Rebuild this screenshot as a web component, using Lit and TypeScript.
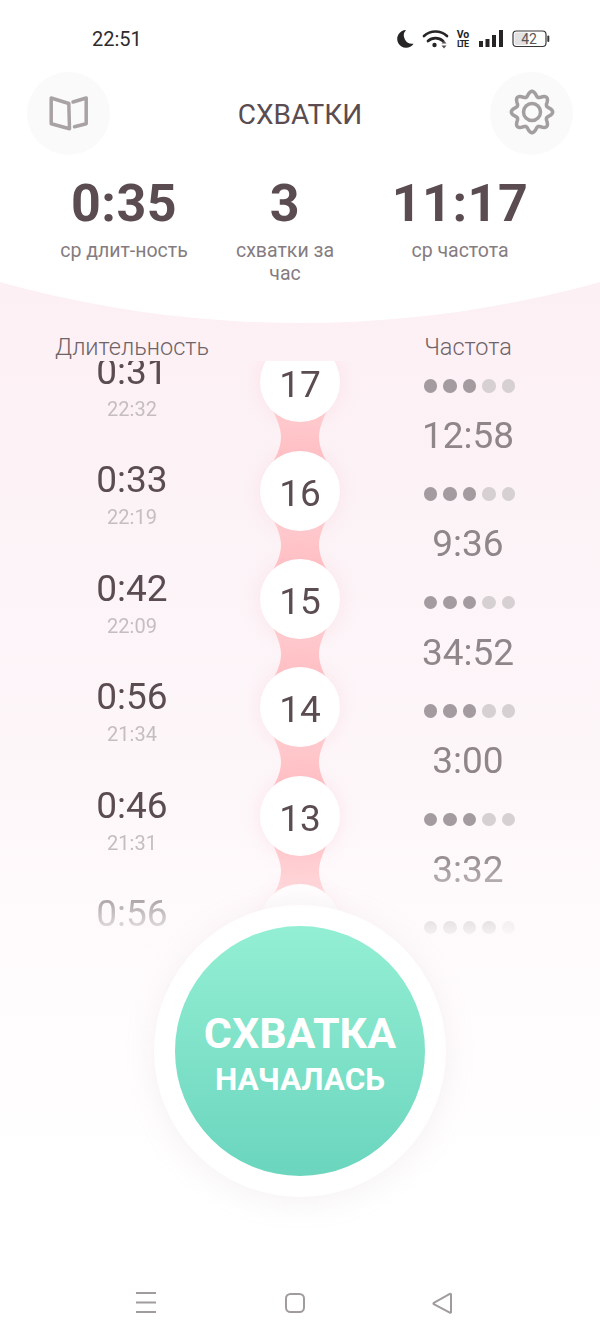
import { LitElement, html, css, svg } from "lit";
import { customElement } from "lit/decorators.js";

const rows = [
  { n: 17, dur: "0:31", at: "22:32", freq: "12:58", on: 3 },
  { n: 16, dur: "0:33", at: "22:19", freq: "9:36", on: 3 },
  { n: 15, dur: "0:42", at: "22:09", freq: "34:52", on: 3 },
  { n: 14, dur: "0:56", at: "21:34", freq: "3:00", on: 3 },
  { n: 13, dur: "0:46", at: "21:31", freq: "3:32", on: 3 },
  { n: 12, dur: "0:56", at: "21:27", freq: "4:10", on: 4 },
];

function gearPath(cx: number, cy: number) {
  const pts: string[] = [];
  for (let i = 0; i < 144; i++) {
    const a = (i / 144) * Math.PI * 2;
    const r = 18.2 + 2.5 * Math.cos(8 * a);
    pts.push(`${(cx + r * Math.sin(a)).toFixed(2)} ${(cy - r * Math.cos(a)).toFixed(2)}`);
  }
  return "M" + pts.join("L") + "Z";
}

@customElement("app-root")
export class AppRoot extends LitElement {
  static styles = css`
    :host { display: block; width: 600px; height: 1339px; font-family: Roboto, "Noto Sans", sans-serif; color: #5a4c50; }
    .screen {
      position: relative; width: 600px; height: 1339px; overflow: hidden; display: flex; flex-direction: column;
      background: linear-gradient(180deg, #fdf0f4 285px, #fcf3f7 500px, #fdf6f9 750px, #fffcfd 1000px, #ffffff 1180px);
    }
    .top { position: relative; height: 334px; flex: none; isolation: isolate; }
    .top::before {
      content: ""; position: absolute; z-index: -1; left: -818px; width: 2236px; height: 2236px; top: -1913px;
      border-radius: 50%; background: #fff;
    }
    .status { height: 71px; display: flex; align-items: flex-start; padding: 0 50px 0 92px; box-sizing: border-box; }
    .clock { font-size: 20px; line-height: 24px; margin-top: 27px; color: #2f2b2d; flex: 1; }
    .status-icons { display: block; margin-top: 26px; }
    .status-icons text { font-family: Roboto, sans-serif; }
    .bar { height: 84px; display: flex; align-items: center; justify-content: space-between; padding: 0 27px; }
    .round { width: 83px; height: 83px; border-radius: 50%; background: #fafafb; display: flex; align-items: center; justify-content: center; }
    .title { font-size: 28px; line-height: 34px; margin-top: 3px; color: #5a4c50; }
    .stats { display: grid; grid-template-columns: 200px 122px 228px; padding-left: 24px; margin-top: 21px; text-align: center; }
    .stat-value { font-size: 52px; line-height: 56px; font-weight: 700; color: #5a4c50; letter-spacing: 0.5px; }
    .stat-label { font-size: 19.5px; line-height: 23px; margin-top: 7px; color: #857c7f; }
    .heads { height: 27px; flex: none; display: grid; grid-template-columns: 264px 72px 264px; font-size: 23.5px; font-weight: 300; line-height: 27px; color: #6e6367; text-align: center; }
    .list {
      flex: none; height: 584px; overflow: hidden; display: grid; grid-template-columns: 264px 72px 264px;
      -webkit-mask-image: linear-gradient(180deg, #000 490px, transparent 584px);
      mask-image: linear-gradient(180deg, #000 490px, transparent 584px);
    }
    .col { display: flex; flex-direction: column; align-items: center; margin-top: -31px; }
    .col.mid { margin-top: -33px; }
    .dur { height: 108.4px; flex: none; display: flex; flex-direction: column; align-items: center; justify-content: flex-start; padding-top: 20px; box-sizing: border-box; }
    .dur b { font-weight: 400; font-size: 37px; line-height: 44px; color: #5a4c50; }
    .dur span { font-size: 20px; line-height: 24px; color: #c5bec1; margin-top: 3px; }
    .bead { position: relative; height: 108.4px; flex: none; width: 72px; display: flex; align-items: center; justify-content: center; }
    .circle {
      position: relative; z-index: 1; flex: none; width: 80px; height: 80px; border-radius: 50%; background: #fff; text-align: center;
      font-size: 37px; line-height: 85px; color: #5a4c50; box-shadow: 0 0 18px rgba(250, 190, 200, .3);
    }
    .link { position: absolute; left: 1px; top: 82px; z-index: 0; display: block; }
    .freq { height: 108.4px; flex: none; box-sizing: border-box; padding-top: 49px; display: flex; flex-direction: column; align-items: center; }
    .dots { display: flex; gap: 6px; height: 14px; flex: none; margin-left: 3px; }
    .dot { width: 13.5px; height: 13.5px; border-radius: 50%; background: #d6d0d3; }
    .dot.on { background: #a39b9f; }
    .freq b { font-weight: 400; font-size: 37px; line-height: 44px; color: #8f868a; margin-top: 21px; white-space: nowrap; }
    .start {
      position: absolute; left: 154px; top: 905px; width: 292px; height: 292px; box-sizing: border-box; padding: 21px; border-radius: 50%;
      background: #fff; box-shadow: 0 4px 30px rgba(190, 170, 180, .16);
    }
    .start-inner {
      width: 250px; height: 250px; border-radius: 50%; background: linear-gradient(180deg, #93efd3, #6bd5be);
      display: flex; flex-direction: column; align-items: center; padding-top: 81px; box-sizing: border-box; color: #fff; font-weight: 700;
    }
    .start-1 { font-size: 43px; line-height: 52px; }
    .start-2 { font-size: 31.5px; line-height: 36px; margin-top: 3px; }
    .nav { margin-top: auto; height: 72px; flex: none; display: block; }
  `;

  render() {
    return html`<div class="screen">
      <div class="top">
        <div class="status">
          <div class="clock">22:51</div>
          <svg class="status-icons" width="154" height="26" viewBox="396 26 154 26">
            <path d="M406 30a8.900 8.900 0 1 0 7.600 13.700 8.300 8.300 0 0 1-7.600-13.700Z" fill="#262425"/>
            <g fill="none" stroke="#262425" stroke-width="2.7" stroke-linecap="round">
              <path d="M424 36a17 17 0 0 1 23 0"/><path d="M428 41a11 11 0 0 1 15 0"/>
            </g>
            <circle cx="434.5" cy="45" r="2.2" fill="#262425"/>
            <path d="M441.5 43.500h5l-2.500-3ZM441.500 45.500h5l-2.500 3Z" fill="#55504f"/>
            <text x="463" y="38" text-anchor="middle" font-size="10.500" font-weight="700" fill="#262425">Vo</text>
            <text x="463" y="47" text-anchor="middle" font-size="9" font-weight="700" fill="#262425" textLength="12">LTE</text>
            <rect x="479" y="41" width="4" height="6" fill="#262425"/><rect x="485.5" y="39" width="4" height="8" fill="#262425"/>
            <rect x="492" y="35" width="4" height="12" fill="#262425"/><rect x="499" y="30" width="4" height="17" fill="#262425"/>
            <rect x="513" y="31" width="33" height="15.5" rx="3.5" fill="none" stroke="#3a3738" stroke-width="1.2"/>
            <rect x="514.5" y="32.5" width="14" height="12.5" rx="2" fill="#e2e2e2"/>
            <rect x="547.3" y="35.5" width="2" height="6.5" rx="1" fill="#3a3738"/>
            <text x="529" y="44" text-anchor="middle" font-size="14" fill="#5a5658">42</text>
          </svg>
        </div>
        <div class="bar">
          <div class="round">
            <svg width="42" height="42" viewBox="47.5 92.5 42 42" fill="none" stroke="#a8a2a4" stroke-width="3.5" stroke-linejoin="round" stroke-linecap="round">
              <path d="M50.700 98.500 68.300 104 69 129.300 50.700 124.300Z"/><path d="M72.500 102.500 85.700 98.500V124.300L74 127.300"/>
            </svg>
          </div>
          <div class="title">СХВАТКИ</div>
          <div class="round">
            <svg width="48" height="48" viewBox="0 0 48 48" fill="none" stroke="#a39ea0" stroke-width="3.5" stroke-linejoin="round">
              <path d=${gearPath(24, 23)}/><circle cx="24" cy="23" r="8.500"/>
            </svg>
          </div>
        </div>
        <div class="stats">
          <div><div class="stat-value">0:35</div><div class="stat-label">ср длит-ность</div></div>
          <div><div class="stat-value">3</div><div class="stat-label">схватки за час</div></div>
          <div><div class="stat-value">11:17</div><div class="stat-label">ср частота</div></div>
        </div>
      </div>
      <div class="heads"><div>Длительность</div><div></div><div>Частота</div></div>
      <div class="list">
        <div class="col">
          ${rows.map((r) => html`<div class="dur"><b>${r.dur}</b><span>${r.at}</span></div>`)}
        </div>
        <div class="col mid">
          ${rows.map((r) => html`<div class="bead">
            ${svg`<svg class="link" width="70" height="60" viewBox="0 0 70 60">
              <defs><linearGradient id="lg${r.n}" x1="0" y1="0" x2="0" y2="1"><stop offset="0" stop-color="#ffcdd0"/><stop offset="1" stop-color="#ffbcc0"/></linearGradient></defs>
              <path d="M8 0C12 10 16 18 16 27C16 38 10 50 3 60L67 60C60 50 54 38 54 27C54 18 58 10 62 0Z" fill="url(#lg${r.n})"/>
            </svg>`}
            <div class="circle">${r.n}</div>
          </div>`)}
        </div>
        <div class="col">
          ${rows.map((r) => html`<div class="freq">
            <div class="dots">${[0, 1, 2, 3, 4].map((i) => html`<div class="dot ${i < r.on ? "on" : ""}"></div>`)}</div>
            <b>${r.freq}</b>
          </div>`)}
        </div>
      </div>
      <div class="start"><div class="start-inner"><div class="start-1">СХВАТКА</div><div class="start-2">НАЧАЛАСЬ</div></div></div>
      <svg class="nav" width="600" height="72" viewBox="0 1267 600 72" fill="none" stroke="#a09c9e" stroke-width="2">
        <path d="M136 1293h20M136 1302.500h20M136 1312h20"/>
        <rect x="286" y="1294" width="18" height="18" rx="4.500"/>
        <path d="M451 1294.500v17.500a.8.800 0 0 1-1.200.7l-16-8.500a.8.800 0 0 1 0-1.400l16-8.900a.8.800 0 0 1 1.200.6Z" stroke-linejoin="round"/>
      </svg>
    </div>`;
  }
}
